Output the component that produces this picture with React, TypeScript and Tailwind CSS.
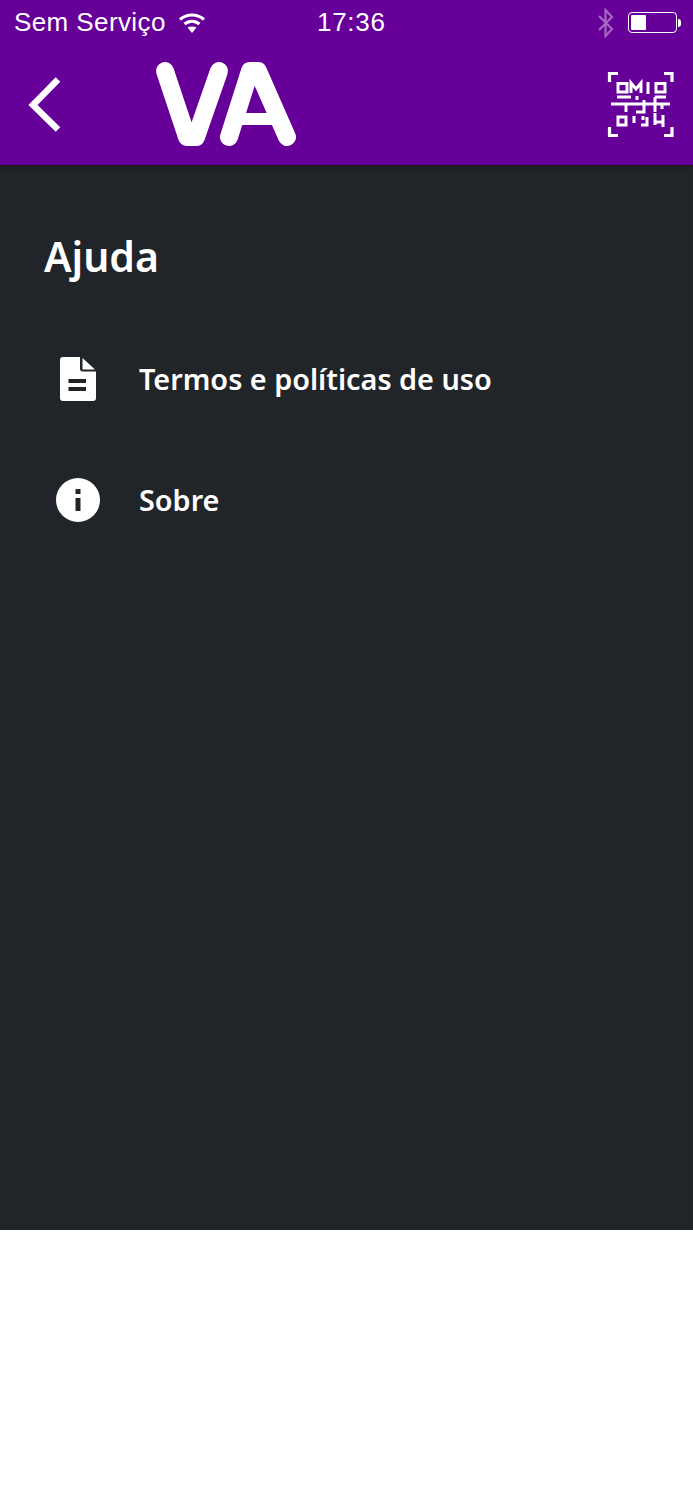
import React from "react";

const BackIcon = () => (
  <svg width="40" height="60" viewBox="0 0 40 60" className="ml-[25px]" fill="none" stroke="white" strokeWidth="6.500">
    <path d="M33 4.500 L8 30 L33 54.500" />
  </svg>
);

const VaLogo = () => (
  <svg width="150" height="96" viewBox="0 0 150 96" className="ml-[82px]" fill="none" stroke="white" strokeLinecap="round" strokeLinejoin="round">
    <path d="M18 14 L40 80 H49 L72 14" strokeWidth="18" />
    <path d="M82 80 L103 14 H111 L140 80" strokeWidth="18" />
    <path d="M92 62 H130" strokeWidth="12" strokeLinecap="butt" />
  </svg>
);

const QrIcon = () => (
  <svg width="80" height="80" viewBox="0 0 80 80" className="ml-auto mr-[13px]" fill="none" stroke="white" strokeWidth="3">
    <path d="M9.500 17 V8.500 H18 M64 8.500 H72 V17 M9.500 62 V70.500 H18 M64 70.500 H72 V62" strokeWidth="3.200" />
    <path d="M18 18.500 H27 V27 H18 Z M56 18.500 H65 V27 H56 Z M17 32 H31 M55 32 H66" />
    <path d="M31 28 V18 L36 24 L41 18 V28 M48 17 V29 M37 31 V35" />
    <path d="M11 39 H70 M26 39 V47 M44 35 V47 H36 M55 32 V47 M62 39 V44" />
    <path d="M18 52 H26 V60 H18 Z M34 51 V58 M43 51 V55 M47 52 V60 H41 M55 48 V60 M63 50 V62 M54 57 H63" />
  </svg>
);

const DocIcon = () => (
  <svg width="36" height="44" viewBox="0 0 36 44" fill="white">
    <path
      fillRule="evenodd"
      d="M3 0 H20 V12 C20 13.500 21 14.500 22.500 14.500 H36 V41 C36 43 35 44 33 44 H3 C1 44 0 43 0 41 V3 C0 1 1 0 3 0 Z M8.500 22 V26 H26 V22 Z M8.500 30 V34 H26 V30 Z"
    />
    <path d="M22.500 1 L35 12.500 H22.500 Z" />
  </svg>
);

const InfoIcon = () => (
  <svg width="44" height="44" viewBox="0 0 44 44" fill="white">
    <path
      fillRule="evenodd"
      d="M22 0 A22 22 0 1 1 22 44 A22 22 0 1 1 22 0 Z M19.500 11 V16 H24.500 V11 Z M19.500 20 V33 H24.500 V20 Z"
    />
  </svg>
);

const MenuItem = ({ icon, label }: { icon: React.ReactNode; label: string }) => (
  <div className="flex items-center h-[60px]">
    <div className="w-[44px] flex justify-center">{icon}</div>
    <span className="ml-[39px] text-[28.8px] font-semibold font-['Noto_Sans',sans-serif] text-white">{label}</span>
  </div>
);

export default function App() {
  return (
    <div className="w-[693px] h-[1500px] bg-white">
      <header className="bg-[#660099] h-[165px] flex flex-col">
        <div className="h-[45px] relative flex items-center pl-[14px] pr-[12px] text-white text-[26px] tracking-[0.4px] font-['Liberation_Sans',sans-serif]">
          <span>Sem Serviço</span>
          <svg width="28" height="20" viewBox="0 0 28 20" className="ml-[12px]" fill="none" stroke="white" strokeWidth="3.200">
            <path d="M2 6.500 C9 0.500 19 0.500 26 6.500 M6.500 11 C11 7.500 17 7.500 21.500 11" />
            <path d="M14 20 L9.500 14.500 C12 13 16 13 18.500 14.500 Z" fill="white" stroke="none" />
          </svg>
          <span className="absolute left-[317px] tracking-[0.7px]">17:36</span>
          <svg width="18" height="30" viewBox="0 0 18 30" className="ml-auto opacity-40" fill="none" stroke="white" strokeWidth="2.200">
            <path d="M2 8 L15 21 L8.500 28 V2 L15 9 L2 22" />
          </svg>
          <div className="ml-[13px] w-[49px] h-[21px] border border-white rounded-[4px] p-[2px]">
            <div className="w-[15px] h-full bg-white rounded-[1px]" />
          </div>
          <div className="ml-[1px] w-[3px] h-[8px] bg-white rounded-r-[3px]" />
        </div>
        <div className="flex-1 flex items-center">
          <BackIcon />
          <VaLogo />
          <QrIcon />
        </div>
      </header>
      <main className="bg-[#212529] h-[1065px] pl-[44px] pt-[61px] shadow-[inset_0_6px_4px_-4px_rgba(0,0,0,0.25)]">
        <h1 className="text-[41px] leading-[60px] font-semibold font-['Noto_Sans',sans-serif] text-white">Ajuda</h1>
        <div className="mt-[63px] pl-[12px] flex flex-col gap-[61px]">
          <MenuItem icon={<DocIcon />} label="Termos e políticas de uso" />
          <MenuItem icon={<InfoIcon />} label="Sobre" />
        </div>
      </main>
    </div>
  );
}
